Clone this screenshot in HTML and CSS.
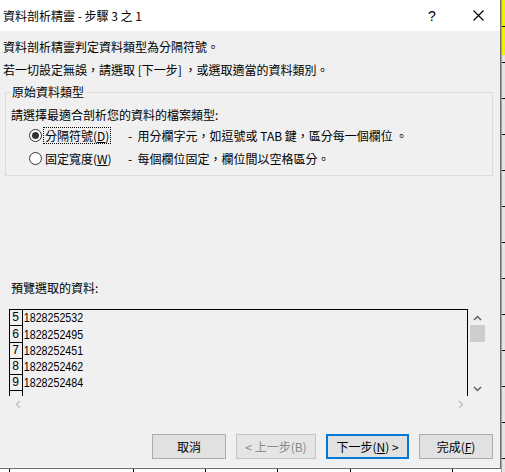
FILE: index.html
```html
<!DOCTYPE html>
<html lang="zh-Hant">
<head>
<meta charset="utf-8">
<title>資料剖析精靈</title>
<link rel="stylesheet" href="styles.css">
</head>
<body>
<div class="screen">
  <div class="dialog">
    <div class="titlebar">
      <span class="title">資料剖析精靈 - 步驟 3 之 1</span>
      <span class="help">?</span>
      <span class="close"><svg width="11" height="11" viewBox="0 0 11 11"><path d="M0.5 0.5L10.5 10.5M10.5 0.5L0.5 10.5" stroke="#000" stroke-width="1.1" fill="none"/></svg></span>
    </div>
    <div class="intro">
      <p>資料剖析精靈判定資料類型為分隔符號。</p>
      <p>若一切設定無誤，請選取 [下一步] ，或選取適當的資料類別。</p>
    </div>
    <fieldset class="group">
      <legend>原始資料類型</legend>
      <p class="prompt">請選擇最適合剖析您的資料的檔案類型:</p>
      <div class="option">
        <span class="radio checked"></span>
        <span class="opt-label"><span class="focus">分隔符號(<u>D</u>)</span></span>
        <span class="desc">-&nbsp; 用分欄字元，如逗號或 TAB 鍵，區分每一個欄位 。</span>
      </div>
      <div class="option">
        <span class="radio"></span>
        <span class="opt-label"><span class="nofocus">固定寬度(<u>W</u>)</span></span>
        <span class="desc">-&nbsp; 每個欄位固定，欄位間以空格區分。</span>
      </div>
    </fieldset>
    <p class="preview-label">預覽選取的資料:</p>
    <div class="preview">
      <div class="viewport">
        <div class="row"><span class="num">5</span><span class="val">1828252532</span></div>
        <div class="row"><span class="num">6</span><span class="val">1828252495</span></div>
        <div class="row"><span class="num">7</span><span class="val">1828252451</span></div>
        <div class="row"><span class="num">8</span><span class="val">1828252462</span></div>
        <div class="row"><span class="num">9</span><span class="val">1828252484</span></div>
        <div class="row"><span class="num"></span></div>
      </div>
      <div class="vscroll">
        <svg class="arrow" width="9" height="6" viewBox="0 0 9 6"><path d="M1 5L4.5 1.5L8 5" stroke="#606060" stroke-width="1.5" fill="none"/></svg>
        <div class="thumb"></div>
        <div class="track"></div>
        <svg class="arrow" width="9" height="6" viewBox="0 0 9 6"><path d="M1 1L4.5 4.5L8 1" stroke="#606060" stroke-width="1.5" fill="none"/></svg>
      </div>
      <div class="hscroll">
        <svg width="6" height="9" viewBox="0 0 6 9"><path d="M5 1L1.5 4.5L5 8" stroke="#c2c2c2" stroke-width="1.5" fill="none"/></svg>
        <svg width="6" height="9" viewBox="0 0 6 9"><path d="M1 1L4.5 4.5L1 8" stroke="#c2c2c2" stroke-width="1.5" fill="none"/></svg>
      </div>
      <div class="corner"></div>
    </div>
    <div class="buttons">
      <button class="btn w74">取消</button>
      <button class="btn w80 disabled">&lt; 上一步(B)</button>
      <button class="btn w83 default">下一步(<u>N</u>) &gt;</button>
      <button class="btn w74">完成(<u>F</u>)</button>
    </div>
  </div>
  <div class="right-strip"></div>
  <div class="bottom-strip"></div>
</div>
</body>
</html>
```
FILE: styles.css
```css
* { box-sizing: border-box; }
html, body { margin: 0; padding: 0; }
body {
  font-family: "Noto Sans CJK TC", "Noto Sans", sans-serif;
  font-size: 12px;
  color: #000;
  background: #fff;
}
p { margin: 0; }

.screen {
  width: 505px;
  height: 472px;
  display: grid;
  grid-template-columns: 501px 4px;
  grid-template-rows: 469px 3px;
  overflow: hidden;
}

.dialog {
  grid-column: 1;
  grid-row: 1;
  background: #f0f0f0;
  border-right: 1px solid #6f6f6f;
  border-bottom: 1px solid #6f6f6f;
  display: flex;
  flex-direction: column;
}

.right-strip {
  grid-column: 2;
  grid-row: 1 / 3;
  background:
    repeating-linear-gradient(to bottom, transparent 0 26px, #000 26px 27px, transparent 27px 36px),
    linear-gradient(to bottom, #f2f000 0 55px, #e4e4e4 55px);
  border-left: 1px solid #a0a0a0;
}

.bottom-strip {
  grid-column: 1;
  grid-row: 2;
  background:
    linear-gradient(to right,
      transparent 9px, #000 9px 10px, transparent 10px 133px,
      #000 133px 134px, transparent 134px 205px,
      #000 205px 206px, transparent 206px 277px,
      #000 277px 278px, transparent 278px 350px,
      #000 350px 351px, transparent 351px 452px,
      #000 452px 453px, transparent 453px),
    #fff;
}

/* title bar */
.titlebar {
  height: 31px;
  background: #fff;
  display: flex;
  align-items: center;
  padding-left: 3px;
}
.title {
  flex: 1;
  font-size: 12px;
  line-height: 16px;
  padding-top: 1px;
}
.help {
  width: 12px;
  font-family: "Liberation Sans", sans-serif;
  font-size: 14px;
  text-align: center;
  margin-right: 35px;
}
.close {
  width: 11px;
  height: 11px;
  display: flex;
  margin-right: 16px;
}

/* intro */
.intro {
  padding: 4px 0 0 3px;
}
.intro p {
  line-height: 23px;
}

/* group */
.group {
  margin: 4px 0 0 5px;
  width: 488px;
  height: 91px;
  border: 1px solid #dcdcdc;
  padding: 7px 0 0 5px;
  min-width: 0;
}
.group legend {
  padding: 0 1px;
  margin-left: 0;
  line-height: 14px;
}
.prompt {
  line-height: 18px;
}
.option {
  height: 23px;
  display: flex;
  align-items: center;
}
.radio {
  width: 13px;
  height: 13px;
  border-radius: 50%;
  border: 1px solid #333;
  background: #fff;
  margin-left: 18px;
  display: flex;
  align-items: center;
  justify-content: center;
}
.radio.checked::after {
  content: "";
  width: 7px;
  height: 7px;
  border-radius: 50%;
  background: #333;
}
.opt-label {
  width: 86px;
  padding-left: 2px;
}
.focus {
  display: inline-block;
  outline: 1px dotted #000;
  outline-offset: 0;
  padding: 0 1px;
  line-height: 15px;
}
.nofocus {
  display: inline-block;
  padding: 0 1px;
  line-height: 15px;
}
u { text-decoration-thickness: 1px; text-underline-offset: 1px; }

/* preview */
.preview-label {
  margin: 104px 0 0 11px;
  line-height: 16px;
}
.preview {
  margin: 13px 0 0 9px;
  display: grid;
  grid-template-columns: 459px 17px;
  grid-template-rows: 87px 17px;
}
.viewport {
  border: 1px solid #000;
  border-bottom: none;
  overflow: hidden;
  background:
    linear-gradient(to right, transparent 12px, #000 12px 13px, transparent 13px);
}
.row {
  height: 16.25px;
  display: flex;
  align-items: flex-end;
}
.num {
  width: 13px;
  height: 100%;
  border-bottom: 1px solid #000;
  font-family: "Liberation Mono", monospace;
  font-size: 12px;
  line-height: 13px;
  padding-left: 2px;
  display: flex;
  align-items: flex-end;
}
.val {
  display: inline-block;
  font-family: "Liberation Sans", sans-serif;
  font-size: 13px;
  line-height: 14px;
  padding-left: 1px;
  transform: scaleX(0.82);
  transform-origin: left center;
  margin-bottom: 1px;
}
.vscroll {
  display: flex;
  flex-direction: column;
  align-items: center;
  padding: 6px 0 4px 1px;
}
.vscroll .arrow { flex: none; }
.thumb {
  margin-top: 4px;
  width: 15px;
  height: 17px;
  background: #cdcdcd;
}
.track { flex: 1; }
.hscroll {
  display: flex;
  justify-content: space-between;
  align-items: center;
  padding: 0 4px 0 6px;
}

/* buttons */
.buttons {
  margin-top: 21px;
  display: flex;
  justify-content: flex-end;
  gap: 10px;
  padding-right: 7px;
}
.btn {
  height: 25px;
  background: #e1e1e1;
  border: 1px solid #adadad;
  font-family: "Noto Sans CJK TC", sans-serif;
  font-size: 12px;
  color: #000;
  padding: 0;
  line-height: 16px;
}
.w74 { width: 74px; }
.w80 { width: 80px; }
.w83 { width: 83px; }
.btn.disabled {
  color: #8a8a8a;
  background: #e5e5e5;
  border-color: #c4c4c4;
}
.btn.default {
  border: 2px solid #0078d7;
}
```
